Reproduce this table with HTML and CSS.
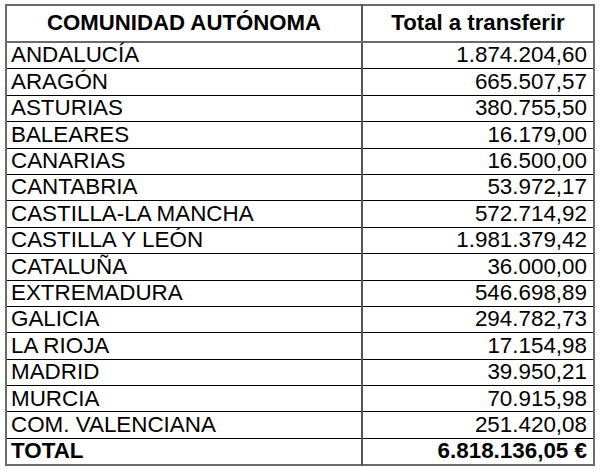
FILE: index.html
```html
<!DOCTYPE html>
<html lang="es">
<head>
<meta charset="utf-8">
<link rel="stylesheet" href="styles.css">
</head>
<body>
<div class="wrap">
<table class="transfer">
<thead>
<tr><th class="c1">COMUNIDAD AUTÓNOMA</th><th class="c2">Total a transferir</th></tr>
</thead>
<tbody>
<tr><td>ANDALUCÍA</td><td class="num">1.874.204,60</td></tr>
<tr><td>ARAGÓN</td><td class="num">665.507,57</td></tr>
<tr><td>ASTURIAS</td><td class="num">380.755,50</td></tr>
<tr><td>BALEARES</td><td class="num">16.179,00</td></tr>
<tr><td>CANARIAS</td><td class="num">16.500,00</td></tr>
<tr><td>CANTABRIA</td><td class="num">53.972,17</td></tr>
<tr><td>CASTILLA-LA MANCHA</td><td class="num">572.714,92</td></tr>
<tr><td>CASTILLA Y LEÓN</td><td class="num">1.981.379,42</td></tr>
<tr><td>CATALUÑA</td><td class="num">36.000,00</td></tr>
<tr><td>EXTREMADURA</td><td class="num">546.698,89</td></tr>
<tr><td>GALICIA</td><td class="num">294.782,73</td></tr>
<tr><td>LA RIOJA</td><td class="num">17.154,98</td></tr>
<tr><td>MADRID</td><td class="num">39.950,21</td></tr>
<tr><td>MURCIA</td><td class="num">70.915,98</td></tr>
<tr><td>COM. VALENCIANA</td><td class="num">251.420,08</td></tr>
<tr class="total"><td>TOTAL</td><td class="num">6.818.136,05 €</td></tr>
</tbody>
</table>
</div>
</body>
</html>
```

FILE: styles.css
```css
html, body {
  margin: 0;
  padding: 0;
  background: #ffffff;
}

body {
  font-family: "Liberation Sans", Arial, sans-serif;
  color: #000000;
}

.wrap {
  padding: 4px 5px;
}

.transfer {
  border-collapse: collapse;
  width: 590px;
  border: 2px solid #6b6b6b;
  table-layout: fixed;
}

.transfer th {
  font-size: 22.2px;
  font-weight: bold;
  height: 35px;
  padding: 0;
  text-align: center;
  border-bottom: 2px solid #6b6b6b;
  line-height: 1;
}

.transfer .c1 {
  width: 354px;
}

.transfer .c2 {
  border-left: 2px solid #555555;
}

.transfer td {
  font-size: 22.4px;
  height: 25.4px;
  padding: 0 3px 0 4px;
  border-top: 1px solid #000000;
  line-height: 1;
  white-space: nowrap;
}

.transfer td.num {
  text-align: right;
  padding-right: 6px;
  border-left: 2px solid #555555;
}

.transfer .total td {
  font-weight: bold;
}
```
